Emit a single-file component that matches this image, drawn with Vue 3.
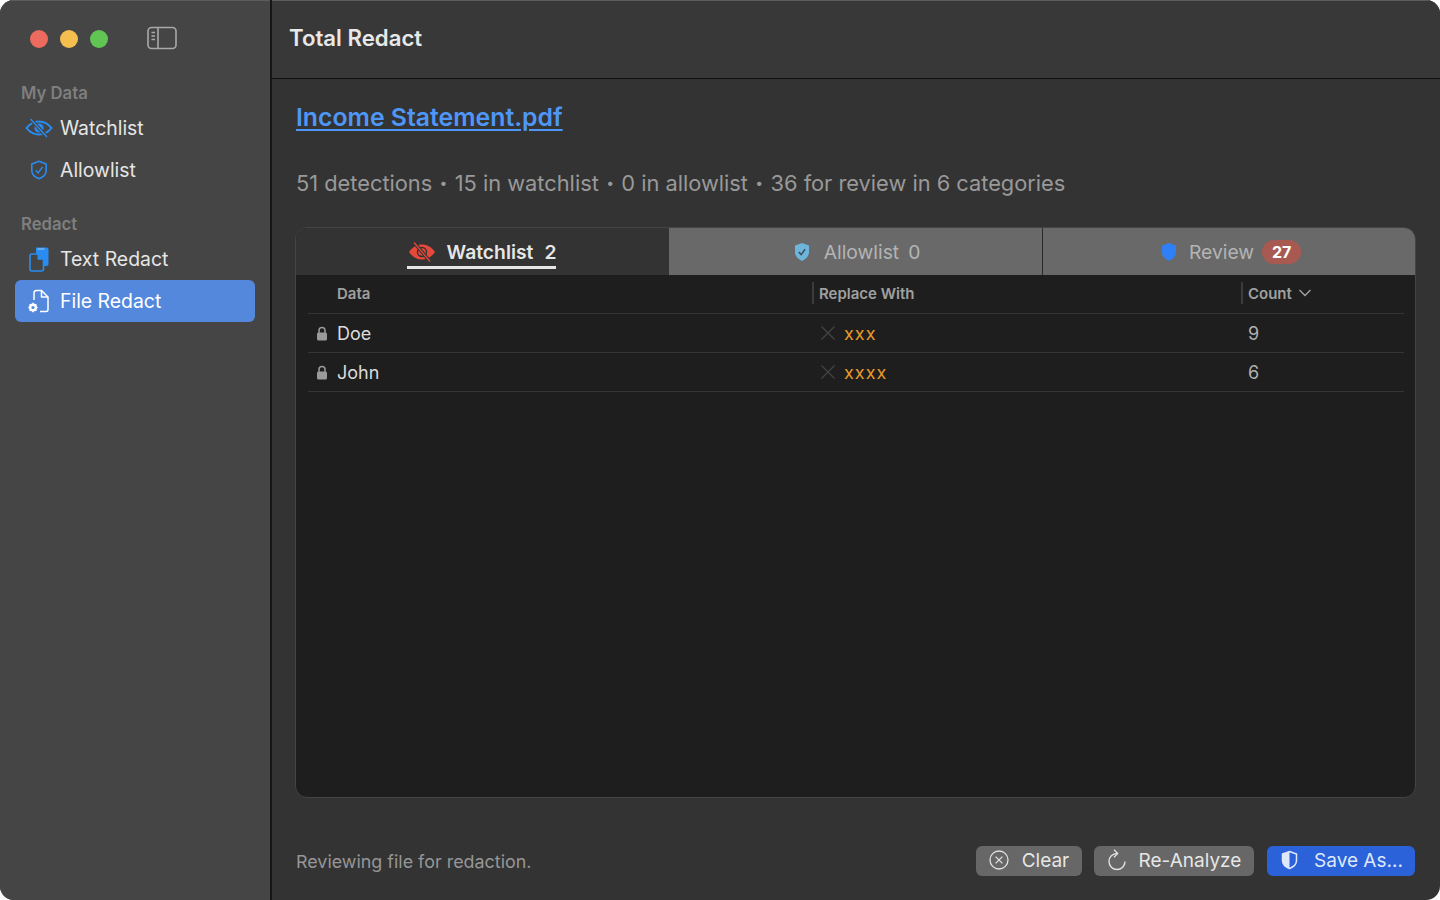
<script setup>
const sidebarGroups = [
  { title: 'My Data', items: [
    { name: 'Watchlist', icon: 'eye' },
    { name: 'Allowlist', icon: 'shield' },
  ] },
  { title: 'Redact', items: [
    { name: 'Text Redact', icon: 'docs' },
    { name: 'File Redact', icon: 'file', active: true },
  ] },
]

const rows = [
  { data: 'Doe', replace: 'xxx', count: 9 },
  { data: 'John', replace: 'xxxx', count: 6 },
]
</script>

<template>
  <div class="window">
    <aside class="sidebar">
      <div class="traffic">
        <span class="dot red"></span>
        <span class="dot yellow"></span>
        <span class="dot green"></span>
        <svg class="toggle" width="30" height="24" viewBox="0 0 30 24" fill="none" stroke="#a9a9a9" stroke-width="1.6">
          <rect x="1" y="1.5" width="28" height="21" rx="3.5" />
          <path d="M11 1.5v21" />
          <path d="M4.5 6.5h3.5M4.5 10h3.5M4.5 13.5h3.5" stroke-width="1.4" />
        </svg>
      </div>
      <div v-for="group in sidebarGroups" :key="group.title" class="group">
        <div class="group-title">{{ group.title }}</div>
        <div v-for="item in group.items" :key="item.name" class="nav-item" :class="{ active: item.active }">
          <span class="nav-icon">
            <svg v-if="item.icon === 'eye'" width="28" height="22" viewBox="0 0 28 22" fill="none" stroke="#2a8cf0" stroke-width="2">
              <path d="M1.5 11C5 6.5 9 4.5 14 4.5S23 6.5 26.5 11C23 15.5 19 17.5 14 17.5S5 15.5 1.5 11Z" />
              <circle cx="14" cy="11" r="4.6" fill="#2a8cf0" stroke="none" />
              <path d="M5.5 2l16.5 18" stroke="#454545" stroke-width="3.4" />
              <path d="M5.5 2l16.5 18" stroke-width="1.4" />
            </svg>
            <svg v-else-if="item.icon === 'shield'" width="18" height="20" viewBox="0 0 18 20" fill="none" stroke="#2a8cf0" stroke-width="1.6">
              <path d="M9 1.2l7.2 2.7v6.6c0 3.8-3 6.6-7.2 8.3-4.2-1.7-7.2-4.5-7.2-8.3V3.9Z" stroke-linejoin="round" />
              <path d="M5.6 10.2l2.5 2.8 4.4-6" stroke-width="1.3" />
            </svg>
            <svg v-else-if="item.icon === 'docs'" width="20" height="25" viewBox="0 0 20 25">
              <path d="M7 0.5h10.5a2 2 0 0 1 2 2V17a2 2 0 0 1-2 2H7Z" fill="#2a8cf0" />
              <path d="M8.5 2h7" stroke="#9fcbf7" stroke-width="1" />
              <path d="M3 7h6l5.5 5.5V22a2 2 0 0 1-2 2H3a2 2 0 0 1-2-2V9a2 2 0 0 1 2-2Z" fill="#454545" stroke="#2a8cf0" stroke-width="1.6" />
              <path d="M8.5 6.8v6h6" fill="#2a8cf0" />
            </svg>
            <svg v-else width="22" height="24" viewBox="0 0 22 24" fill="none" stroke="#fff" stroke-width="1.5">
              <path d="M6 11V4a2.5 2.5 0 0 1 2.5-2.5h5L20 8v12.5a2 2 0 0 1-2 2h-6" stroke-linejoin="round" />
              <path d="M13.5 1.5V8H20" stroke-linejoin="round" />
              <circle cx="5" cy="18.5" r="2.8" stroke-width="2.4" />
              <path d="M5 13.8v2M5 21.2v2M.3 18.5h2M7.7 18.5h2M1.7 15.2l1.4 1.4M6.9 20.4l1.4 1.4M8.3 15.2l-1.4 1.4M3.1 20.4l-1.4 1.4" stroke-width="1.6" />
            </svg>
          </span>
          <span>{{ item.name }}</span>
        </div>
      </div>
    </aside>

    <main class="main">
      <header class="titlebar">Total Redact</header>
      <div class="content">
        <a class="file-link">Income Statement.pdf</a>
        <div class="summary">
          <span>51 detections</span><i>•</i><span>15 in watchlist</span><i>•</i><span>0 in allowlist</span><i>•</i><span>36 for review in 6 categories</span>
        </div>

        <section class="card">
          <div class="tabs">
            <div class="tab current">
              <div class="tab-inner">
                <svg width="28" height="20" viewBox="0 0 28 20">
                  <path d="M1 10C5 4.5 9 2.5 14 2.5S23 4.5 27 10C23 15.5 19 17.5 14 17.5S5 15.5 1 10Z" fill="#e5493a" />
                  <circle cx="14" cy="10" r="4.5" fill="none" stroke="#333" stroke-width="1.4" />
                  <path d="M6 0.5l16 19" stroke="#333" stroke-width="3.4" />
                  <path d="M6 0.5l16 19" stroke="#e5493a" stroke-width="1.3" />
                </svg>
                <span class="tab-label">Watchlist</span>
                <span class="tab-label">2</span>
              </div>
            </div>
            <div class="tab allow">
              <svg width="16" height="20" viewBox="0 0 16 20">
                <path d="M8 1l7 2.5v7c0 3.7-3 6.5-7 8.5-4-2-7-4.8-7-8.5v-7Z" fill="#6db5da" />
                <path d="M4.8 10l2.3 2.6 4-5.4" fill="none" stroke="#3d4c58" stroke-width="1.5" />
              </svg>
              <span class="tab-label dim">Allowlist</span>
              <span class="tab-label dim zero">0</span>
            </div>
            <div class="tab review">
              <svg width="16" height="20" viewBox="0 0 16 20">
                <path d="M8 1l7 2.5v7c0 3.7-3 6.5-7 8.5-4-2-7-4.8-7-8.5v-7Z" fill="#2f80f6" />
              </svg>
              <span class="tab-label dim">Review</span>
              <span class="badge">27</span>
            </div>
          </div>

          <div class="table">
            <div class="row head">
              <div class="cell first">Data</div>
              <div class="cell sep">Replace With</div>
              <div class="cell sep">
                Count
                <svg width="14" height="8" viewBox="0 0 14 8" fill="none" stroke="#a0a0a0" stroke-width="1.4"><path d="M1.5 1l5.5 5.5L12.5 1" /></svg>
              </div>
            </div>
            <div v-for="row in rows" :key="row.data" class="row">
              <div class="cell first data">
                <svg class="lock" width="12" height="15" viewBox="0 0 12 15">
                  <path d="M3 7V4.5a3 3 0 0 1 6 0V7" fill="none" stroke="#9a9a9a" stroke-width="1.5" />
                  <rect x="1" y="6.5" width="10" height="8" rx="1.5" fill="#9a9a9a" />
                </svg>
                {{ row.data }}
              </div>
              <div class="cell replace">
                <svg width="16" height="16" viewBox="0 0 16 16" stroke="#444" stroke-width="1.2"><path d="M1.5 1.5l13 13M14.5 1.5l-13 13" /></svg>
                <span>{{ row.replace }}</span>
              </div>
              <div class="cell count">{{ row.count }}</div>
            </div>
          </div>
        </section>

        <footer class="footer">
          <span class="status">Reviewing file for redaction.</span>
          <div class="buttons">
            <button class="btn clear">
              <svg width="20" height="20" viewBox="0 0 20 20" fill="none" stroke="#e0e0e0" stroke-width="1.3">
                <circle cx="10" cy="10" r="9" />
                <path d="M6.6 6.6l6.8 6.8M13.4 6.6l-6.8 6.8" />
              </svg>
              Clear
            </button>
            <button class="btn analyze">
              <svg width="20" height="22" viewBox="0 0 20 22" fill="none" stroke="#e0e0e0" stroke-width="1.4">
                <path d="M10 4.5A8 8 0 1 0 18 12.5" />
                <path d="M7 0.8l3.7 3.7L7 8.2" stroke-width="1.3" />
              </svg>
              Re-Analyze
            </button>
            <button class="btn save">
              <svg width="17" height="20" viewBox="0 0 17 20">
                <path d="M8.5 1.5l7 2.5v6.5c0 3.6-3 6.4-7 8-4-1.6-7-4.4-7-8V4Z" fill="none" stroke="#dfe8fb" stroke-width="1.5" />
                <path d="M8.5 1.5v17c-4-1.6-7-4.4-7-8V4Z" fill="#dfe8fb" />
              </svg>
              Save As...
            </button>
          </div>
        </footer>
      </div>
    </main>
  </div>
</template>

<style scoped>
.window {
  width: 1440px;
  height: 900px;
  display: flex;
  border-radius: 14px;
  overflow: hidden;
  background: #333;
  font-family: Inter, "Liberation Sans", sans-serif;
  color: #e2e2e2;
}

.sidebar {
  width: 270px;
  flex-shrink: 0;
  box-sizing: border-box;
  padding: 0 15px;
  background: #454545;
  box-shadow: inset 0 1px 0 #5c5c5c;
}

.traffic {
  display: flex;
  align-items: center;
  height: 78px;
  padding-left: 15px;
  gap: 12px;
}

.dot {
  width: 18px;
  height: 18px;
  border-radius: 50%;
}
.red { background: #ed6a5e; }
.yellow { background: #f4bf4f; }
.green { background: #61c554; }

.toggle {
  margin-left: 27px;
  margin-top: -2px;
}

.group {
  margin-bottom: 18px;
}

.group-title {
  padding-left: 6px;
  height: 29px;
  line-height: 30px;
  font-size: 16.7px;
  font-weight: 600;
  color: #7f7f7f;
}

.nav-item {
  display: flex;
  align-items: center;
  height: 42px;
  border-radius: 6px;
  font-size: 19.4px;
  font-weight: 400;
  color: #e6e6e6;
}

.nav-item.active {
  background: #5488dd;
  color: #fff;
}

.nav-icon {
  width: 45px;
  flex-shrink: 0;
  display: flex;
  justify-content: center;
  padding-left: 3px;
  box-sizing: border-box;
}

.main {
  flex: 1;
  display: flex;
  flex-direction: column;
  border-left: 2px solid #161616;
}

.titlebar {
  height: 79px;
  flex-shrink: 0;
  box-sizing: border-box;
  padding: 0 0 4px 17px;
  display: flex;
  align-items: center;
  background: #383838;
  border-bottom: 1px solid #111;
  box-shadow: inset 0 1px 0 #5c5c5c;
  font-size: 22.2px;
  font-weight: 600;
  color: #e8e8e8;
}

.content {
  flex: 1;
  display: flex;
  flex-direction: column;
  padding: 21px 24px 0 24px;
}

.file-link {
  align-self: flex-start;
  font-size: 24.8px;
  line-height: 34px;
  font-weight: 600;
  color: #4f97f7;
  text-decoration: underline;
  text-underline-offset: 3px;
}

.summary {
  margin-top: 33px;
  height: 32px;
  line-height: 32px;
  font-size: 21.8px;
  color: #999;
  display: flex;
}

.summary i {
  font-style: normal;
  width: 22.5px;
  font-size: 14px;
  text-align: center;
}

.card {
  margin: 28px 0 0 -1px;
  height: 571px;
  box-sizing: border-box;
  border: 1px solid #444;
  border-radius: 12px;
  overflow: hidden;
  background: #1e1e1e;
  display: flex;
  flex-direction: column;
}

.tabs {
  display: grid;
  grid-template-columns: 1fr 1fr 1fr;
  height: 47px;
  flex-shrink: 0;
}

.tab {
  display: flex;
  align-items: center;
  justify-content: center;
  gap: 12px;
  background: #696969;
}

.tab.allow {
  padding-left: 3px;
}

.tab.allow svg {
  margin-right: 2px;
}

.tab.review {
  border-left: 1px solid #2a2a2a;
  padding-left: 4px;
}

.tab.current {
  background: #333;
  padding-right: 2px;
}

.tab-inner {
  display: flex;
  align-items: center;
  gap: 11px;
  height: 100%;
  padding-left: 1px;
  box-sizing: border-box;
  position: relative;
}

.tab-inner::after {
  content: "";
  position: absolute;
  left: 0;
  right: 0;
  bottom: 6px;
  height: 3px;
  background: #e6e6e6;
}

.tab-label {
  font-size: 19.3px;
  font-weight: 600;
  color: #e6e6e6;
}

.tab-label.dim {
  font-weight: 400;
  color: #b4b4b4;
}

.tab-label.zero {
  margin-left: -3px;
}

.badge {
  width: 39px;
  height: 24px;
  margin-left: -4px;
  border-radius: 12px;
  background: #a85a52;
  color: #fff;
  font-size: 16px;
  font-weight: 700;
  display: flex;
  align-items: center;
  justify-content: center;
}

.table {
  padding: 0 11px 0 12px;
}

.row {
  display: grid;
  grid-template-columns: 504px 429px 1fr;
  height: 39px;
  box-sizing: border-box;
  border-bottom: 1.5px solid #353535;
  align-items: center;
}

.head {
  height: 39px;
  padding-bottom: 2px;
  font-size: 15px;
  font-weight: 600;
  color: #a0a0a0;
}

.cell {
  display: flex;
  align-items: center;
  height: 22px;
}

.first {
  padding-left: 29px;
  position: relative;
}

.sep {
  border-left: 2px solid #3c3c3c;
  padding-left: 5px;
  gap: 6px;
}

.data {
  font-size: 18px;
  color: #dcdcdc;
}

.lock {
  position: absolute;
  left: 8px;
}

.replace {
  gap: 8px;
  padding-left: 8px;
  font-size: 18px;
  color: #e79a2b;
  letter-spacing: 1px;
}

.count {
  padding-left: 7px;
  font-size: 18px;
  color: #b0b0b0;
}

.footer {
  height: 102px;
  padding-right: 1px;
  display: flex;
  align-items: center;
  justify-content: space-between;
  padding-top: 24px;
  box-sizing: border-box;
  padding-bottom: 0;
}

.status {
  font-size: 17.9px;
  color: #969696;
}

.buttons {
  display: flex;
  gap: 12px;
}

.btn {
  height: 30px;
  border: none;
  border-radius: 6px;
  background: #676767;
  color: #e6e6e6;
  font-family: inherit;
  font-size: 19px;
  display: flex;
  align-items: center;
  justify-content: center;
  padding: 0 0 2px;
}

.clear { width: 106px; gap: 13px; }
.analyze { width: 160px; gap: 12px; }
.save { width: 148px; gap: 16px; padding-left: 2px; background: #2b62d9; color: #dfe8fb; margin-left: 1px; }
</style>

<style>
html, body {
  margin: 0;
  background: #fff;
  overflow: hidden;
}
</style>
